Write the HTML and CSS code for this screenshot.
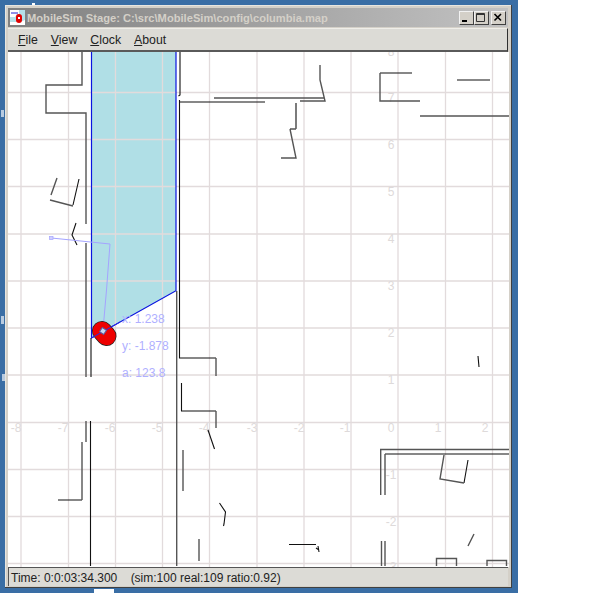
FILE: index.html
```html
<!DOCTYPE html>
<html lang="en">
<head>
<meta charset="utf-8">
<title>MobileSim Stage</title>
<link rel="stylesheet" href="styles.css">
</head>
<body>
<div class="desktop">
  <span class="speck speck-top"></span>
  <span class="speck speck-m"></span>
  <span class="speck speck-e"></span>
  <span class="speck speck-n"></span>
  <span class="speck speck-bottom"></span>
  <div class="window">
    <div class="titlebar">
      <svg class="app-icon" width="15" height="15" viewBox="0 0 15 15">
        <rect width="15" height="15" fill="#b5dfe8"/>
        <path d="M0 0H9V4H7L5 7H0Z" fill="#fff"/>
        <path d="M0 15H15V10L10 12H0Z" fill="#fff"/>
        <path d="M1 3H8" stroke="#2020d0" stroke-width="1"/>
        <path d="M9 7L9 10" stroke="#e00000" stroke-width="6" stroke-linecap="round"/>
        <rect x="8" y="7" width="2" height="2" fill="#fff"/>
      </svg>
      <span class="title-text">MobileSim Stage: C:\src\MobileSim\config\columbia.map</span>
      <div class="caption-buttons">
        <span class="cap-btn"><svg width="14" height="13" viewBox="0 0 14 13"><path d="M3 10H8" stroke="#000" stroke-width="2"/></svg></span>
        <span class="cap-btn"><svg width="14" height="13" viewBox="0 0 14 13"><path d="M2.5 2.5H10.5V10.5H2.5Z M2.5 3.5H10.5" fill="none" stroke="#333" stroke-width="1"/></svg></span>
        <span class="cap-btn cap-close"><svg width="14" height="13" viewBox="0 0 14 13"><path d="M3.5 3L10 9.5M10 3L3.5 9.5" stroke="#000" stroke-width="1.6"/></svg></span>
      </div>
    </div>
    <div class="menubar">
      <span class="menu-item"><u>F</u>ile</span>
      <span class="menu-item"><u>V</u>iew</span>
      <span class="menu-item"><u>C</u>lock</span>
      <span class="menu-item"><u>A</u>bout</span>
    </div>
    <svg class="stage" width="501" height="515" viewBox="8 52 501 515">
      <path class="laser" d="M91.5 52H176V290.7L91.5 338Z"/>
      <g class="grid">
        <path d="M21 52V567M68.5 52V567M115.5 52V567M162.5 52V567M209.5 52V567M257 52V567M304 52V567M351 52V567M398 52V567M445.5 52V567M492.5 52V567"/>
        <path d="M8 92.5H509M8 139.5H509M8 186.5H509M8 234H509M8 281H509M8 328H509M8 375H509M8 422.5H509M8 469.5H509M8 516.5H509M8 563.5H509"/>
      </g>
      <g class="axis">
        <text x="391" y="56">8</text><text x="391" y="102">7</text><text x="391" y="149">6</text>
        <text x="391" y="196">5</text><text x="391" y="243">4</text><text x="391" y="290">3</text>
        <text x="391" y="337">2</text><text x="391" y="384">1</text><text x="391" y="432">0</text>
        <text x="391" y="479">-1</text><text x="391" y="526">-2</text><text x="391" y="571">-3</text>
        <text x="16" y="432">-8</text><text x="63" y="432">-7</text><text x="110" y="432">-6</text>
        <text x="157" y="432">-5</text><text x="204" y="432">-4</text><text x="252" y="432">-3</text>
        <text x="299" y="432">-2</text><text x="345" y="432">-1</text>
        <text x="438" y="432">1</text><text x="485" y="432">2</text>
      </g>
      <path class="laser-edge" d="M91.5 52V338L176 290.7V52"/>
      <g class="walls-dark">
        <path d="M91 338V377M90.5 421V566M179.5 100V358H216M181.5 383V411H216"/>
        <path d="M180 52V95L178.5 96M179 102H265M296 103V128"/>
        <path d="M76 223L72 235L77 245M79 179L73 205M208 430L214.5 449M219.5 503L225.5 512L224 524L223.5 526"/>
        <path d="M289 544.5H316M58 500H82M385 454H509M468 460L464 483M478 356L479 367"/>
        <path d="M318 546L319 552M316 548L319 550"/>
        <path d="M380 73H412M457 80H490"/>
      </g>
      <g class="walls-grey">
        <path d="M176.7 291V566"/>
        <path d="M82 52V85H46V113H86V224M86 243V377M86 421V442M82 442V500"/>
        <path d="M214 98H324M320 65V80L325 101H300M290 129H296M290 129L296 158H281M296 128V129"/>
        <path d="M380 73V101H420M420 116H509M216 358V376M216 411V428"/>
        <path d="M57 178L51 195M50 200L73 206M183 450V491M199 539V561"/>
        <path d="M380.7 495V449.5H509M385 495V454M444 455L440 479L464 483M474 534L468 546"/>
        <path d="M381.5 541V566M385 541V566M436.5 566V558.5H456.5V566M487 566V560.5H506.5V566"/>
      </g>
      <g class="trail">
        <path d="M51.5 238L110 244L106.5 290L103 330"/>
        <rect x="49.5" y="236.5" width="3.5" height="3"/>
      </g>
      <g class="robot">
        <path class="robot-edge" d="M102 331L106.5 336"/>
        <path class="robot-body" d="M102 331L106.5 336"/>
        <path class="robot-beam" d="M91.5 338L120 322"/>
        <rect class="robot-mark" x="100.5" y="328.5" width="5" height="5" transform="rotate(35 103 331)"/>
      </g>
      <g class="readout">
        <text x="122" y="323">x: 1.238</text>
        <text x="122" y="350">y: -1.878</text>
        <text x="122" y="377">a: 123.8</text>
      </g>
    </svg>
    <div class="statusbar">Time: 0:0:03:34.300    (sim:100 real:109 ratio:0.92)</div>
  </div>
</div>
</body>
</html>
```

FILE: styles.css
```css
html, body {
  margin: 0;
  padding: 0;
  background: #fff;
}
body {
  width: 600px;
  height: 593px;
  overflow: hidden;
}
.desktop {
  position: relative;
  width: 518px;
  height: 593px;
  box-sizing: border-box;
  padding: 5px 6px 5px 5px;
  background: #3a6ea5;
}
.speck {
  position: absolute;
  background: #fff;
}
.speck-top { left: 32px; top: 3px; width: 3px; height: 2px; }
.speck-m { left: 1px; top: 110px; width: 3px; height: 7px; background: #b8cbe0; }
.speck-e { left: 1px; top: 316px; width: 3px; height: 8px; background: #b8cbe0; }
.speck-n { left: 2px; top: 374px; width: 3px; height: 7px; background: #b8cbe0; }
.speck-bottom { left: 94px; top: 589px; width: 20px; height: 4px; }
.window {
  width: 507px;
  height: 583px;
  box-sizing: border-box;
  padding: 3px 3px 1px 3px;
  display: flex;
  flex-direction: column;
  background: #d4d0c8;
  border-right: 1px solid #404040;
  border-bottom: 1px solid #404040;
  box-shadow: inset 1px 1px 0 #e8e6e0;
}
.titlebar {
  height: 19px;
  flex: none;
  display: flex;
  align-items: center;
  padding: 0 2px 0 2px;
  background: linear-gradient(to right, #808080, #c2c2c2);
}
.app-icon {
  flex: none;
  margin-right: 2px;
}
.title-text {
  flex: 1;
  font: bold 11.15px "Liberation Sans", Arial, sans-serif;
  color: #d4d0c8;
  white-space: nowrap;
}
.caption-buttons {
  display: flex;
  flex: none;
}
.cap-btn {
  width: 15px;
  height: 14px;
  box-sizing: border-box;
  display: block;
  background: #d4d0c8;
  border-top: 1px solid #f2f2f2;
  border-left: 1px solid #f2f2f2;
  border-right: 1px solid #404040;
  border-bottom: 1px solid #404040;
  line-height: 0;
}
.cap-btn svg {
  margin: -1px 0 0 -1px;
}
.cap-close {
  margin-left: 2px;
}
.menubar {
  height: 24px;
  flex: none;
  margin-top: 1px;
  box-sizing: border-box;
  display: flex;
  align-items: center;
  gap: 13px;
  padding: 0 0 0 10px;
  background: #dcdbd6;
  border-top: 1px solid #efeee9;
  border-right: 1px solid #303030;
  border-bottom: 2px solid #5a5a5a;
  font: 12.3px "Liberation Sans", Arial, sans-serif;
  color: #222;
}
.menu-item u {
  text-underline-offset: 1px;
}
.stage {
  display: block;
  flex: none;
  background: #fff;
}
.laser { fill: #b0dfe6; }
.grid path {
  fill: none;
  stroke: #e2dbdc;
  stroke-width: 1.3;
}
.axis text {
  font: 12px "Liberation Sans", Arial, sans-serif;
  fill: #dedada;
  text-anchor: middle;
}
.laser-edge {
  fill: none;
  stroke: #0a14e0;
  stroke-width: 1.2;
}
.walls-dark path, .walls-grey path {
  fill: none;
  stroke-linejoin: miter;
}
.walls-dark path {
  stroke: #111;
  stroke-width: 1.1;
}
.walls-grey path {
  stroke: #555;
  stroke-width: 1.4;
}
.trail path {
  fill: none;
  stroke: #a4a4ff;
  stroke-width: 1;
}
.trail rect {
  fill: #d0d0ff;
  stroke: #a4a4ff;
  stroke-width: 0.7;
}
.robot-edge, .robot-body {
  fill: none;
  stroke-linecap: round;
}
.robot-edge {
  stroke: #222;
  stroke-width: 20;
}
.robot-body {
  stroke: #ee0000;
  stroke-width: 18.5;
}
.robot-beam {
  stroke: #2a2ae8;
  stroke-width: 1;
}
.robot-mark {
  fill: #c8d8f4;
  stroke: #5a5a9a;
  stroke-width: 1;
}
.readout text {
  font: 12px "Liberation Sans", Arial, sans-serif;
  fill: #b0b0ff;
}
.statusbar {
  flex: none;
  height: 19px;
  box-sizing: border-box;
  padding: 3px 0 0 2px;
  background: #dcdbd6;
  border-top: 1px solid #555;
  border-left: 1px solid #555;
  font: 12px "Liberation Sans", Arial, sans-serif;
  color: #222;
  white-space: pre;
}
```
